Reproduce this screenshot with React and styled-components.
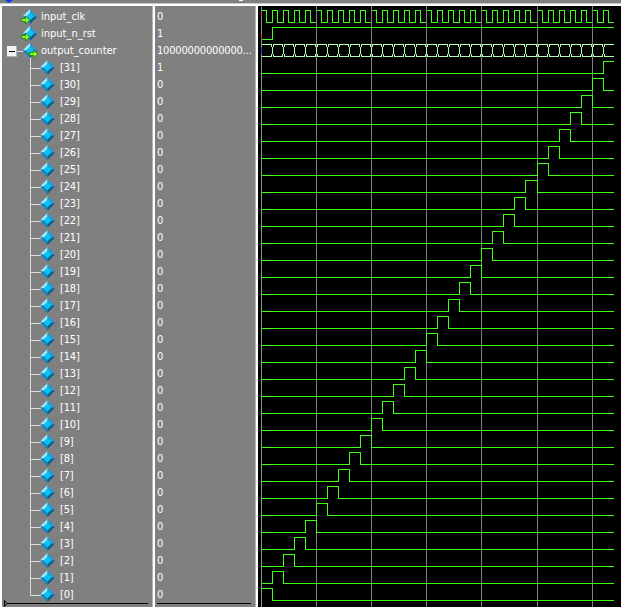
import React from "react";
import styled, { createGlobalStyle } from "styled-components";

const ROW = 17;
const PERIOD = 11.033;
const START = 3;
const END = 356;
const BITS = Array.from({ length: 32 }, (_, i) => 31 - i);

const Global = createGlobalStyle`
  body { margin: 0; background: #000; overflow: hidden; }
`;

const Window = styled.main`
  width: 621px;
  height: 607px;
  display: flex;
  flex-direction: column;
  overflow: hidden;
  background: #808080;
  font: 11px/17px "DejaVu Sans Condensed", "DejaVu Sans", sans-serif;
  font-stretch: condensed;
  color: #fff;
`;

const Header = styled.header`
  height: 3px;
  flex: none;
  display: flex;
  padding-left: 5px;
  background: #808080;
  border-bottom: 1px solid #c8c8c8;
`;

const Marker = styled.svg`
  display: block;
`;

const Panes = styled.div`
  flex: 1;
  min-height: 0;
  display: grid;
  grid-template-columns: 155px 103px 363px;
  border-top: 2px solid #fff;
`;

const Pane = styled.section`
  box-sizing: border-box;
  height: 601px;
  display: flex;
  flex-direction: column;
  padding-top: 2px;
  background: #808080;
  border-right: 2px solid #fff;
  border-left: ${(p) => (p.$first ? "2px solid #fff" : "0")};
  box-shadow: inset -1px 0 #b4b4b4;
`;

const Row = styled.div`
  height: ${ROW}px;
  flex: none;
  display: flex;
  align-items: center;
  white-space: nowrap;
`;

const Art = styled.svg`
  width: ${(p) => p.$w}px;
  height: 17px;
  flex: none;
  display: block;
`;

const Label = styled.span`
  letter-spacing: ${(p) => p.$track || 0}px;
`;

const Value = styled(Label)`
  padding-left: 2px;
`;

const Baseline = styled.svg`
  display: block;
  flex: none;
  height: 8px;
  margin-top: -4px;
`;

const Waves = styled.svg`
  display: block;
  background: #000;
`;

function Diamond({ x, y }) {
  return (
    <g transform={`translate(${x} ${y})`}>
      <path d="M0 -7.5L-7.5 0L0 0Z" fill="#a4e8fa" />
      <path d="M0 -7.5L7.5 0L0 0Z" fill="#1b9fd4" />
      <path d="M-7.5 0L0 7.5L0 0Z" fill="#1683bd" />
      <path d="M7.5 0L0 7.5L0 0Z" fill="#075f91" />
      <path d="M0 -4L4 0L0 4L-4 0Z" fill="#0cc0f5" />
    </g>
  );
}

function Arrow({ x, y }) {
  return (
    <path
      transform={`translate(${x} ${y})`}
      d="M0 2.5H4V0L8.5 4L4 8V5.5H0Z"
      fill="#8cf52a"
      stroke="#177c0c"
      strokeWidth="0.8"
    />
  );
}

function PortArt({ output }) {
  return (
    <Art $w={39} viewBox="0 0 39 17">
      {output && (
        <g shapeRendering="crispEdges">
          <path d="M15 9.5H21M28.5 14V17" stroke="#dcdcdc" />
          <rect x="5" y="4" width="10" height="11" fill="#f4f4f8" />
          <path d="M5 14.5H15M14.5 4V15" stroke="#aeb4c0" />
          <path d="M7 9H13" stroke="#000" />
        </g>
      )}
      <Diamond x={28} y={8.5} />
      <Arrow x={output ? 27.5 : 19.5} y={8} />
    </Art>
  );
}

function BitArt({ last }) {
  return (
    <Art $w={58} viewBox="0 0 58 17">
      <path
        d={`M28.5 0V${last ? 10 : 17}M28 9.5H39`}
        stroke="#dcdcdc"
        shapeRendering="crispEdges"
        fill="none"
      />
      <Diamond x={45.5} y={8.5} />
    </Art>
  );
}

const edge = (k) => START + Math.floor(k * PERIOD + 0.2) + 0.5;

function clockPath() {
  let d = `M${START} 4.5`;
  for (let k = 0; k < 32; k++) {
    const fall = edge(k) + 5;
    d += `H${fall}V16.5H${k === 31 ? END : edge(k + 1)}`;
    if (k < 31) d += "V4.5";
  }
  return d;
}

function busPath() {
  let d = "";
  for (let k = 0; k < 32; k++) {
    const a = edge(k);
    const b = k === 31 ? END : edge(k + 1) - 0.5;
    d += `M${a + 0.5} 38.5H${b}M${a + 0.5} 50.5H${b}`;
    if (k) d += `M${a + 1} 38V41M${a} 41V48M${a + 1} 48V51`;
    if (k < 31) d += `M${edge(k + 1) - 1} 38V41M${edge(k + 1) - 1} 48V51`;
  }
  return d;
}

function bitPath(bit) {
  const low = 67.5 + (31 - bit) * ROW;
  const high = low - 12;
  const rise = edge(bit);
  const begin = bit === 0 ? `M${START} ${high}` : `M${START} ${low}H${rise}V${high}`;
  return bit === 31 ? `${begin}H${END}` : `${begin}H${edge(bit + 1)}V${low}H${END}`;
}

function WavePane() {
  return (
    <Waves width="363" height="601" viewBox="0 0 363 601" shapeRendering="crispEdges" fill="none">
      <g stroke="#3cff14">
        <path d={clockPath()} />
        <path d={`M${START} 33.5H${edge(1)}V21.5H${END}`} />
        {BITS.map((bit) => (
          <path key={bit} d={bitPath(bit)} />
        ))}
      </g>
      {[5, 10, 15, 20, 25, 30].map((k) => (
        <path key={k} d={`M${edge(k)} 0V601`} stroke="#808080" />
      ))}
      <g stroke="#3cff14">
        <path d={`M${edge(1)} 21.5H${END}`} />
        {BITS.map((bit) => (
          <path key={bit} d={bitPath(bit)} />
        ))}
      </g>
      <path d={busPath()} stroke="#b4ffb4" />
      <path d="M3.5 1V601" stroke="#78a078" />
      <path d="M3.5 5V11M3.5 28V34" stroke="#c04058" />
      <path d="M3.5 41V48" stroke="#2038e0" />
    </Waves>
  );
}

export default function App() {
  return (
    <>
      <Global />
      <Window>
        <Header>
          <Marker width="240" height="3" viewBox="0 0 240 3">
            <path d="M0 0H8L4 3Z" fill="#0040f0" />
            <path d="M234 0.5H238" stroke="#fff" />
          </Marker>
        </Header>
        <Panes>
          <Pane $first>
            <Row><PortArt /><Label>input_clk</Label></Row>
            <Row><PortArt /><Label>input_n_rst</Label></Row>
            <Row><PortArt output /><Label>output_counter</Label></Row>
            {BITS.map((bit) => (
              <Row key={bit}>
                <BitArt last={bit === 0} />
                <Label $track={-0.2}>[{bit}]</Label>
              </Row>
            ))}
            <Baseline width="150" viewBox="0 0 150 8">
              <path d="M5 4.5H146M2.5 1.5V7.5L5 4.5Z" stroke="#000" fill="none" />
            </Baseline>
          </Pane>
          <Pane>
            <Row><Value>0</Value></Row>
            <Row><Value>1</Value></Row>
            <Row><Value $track={-0.17}>10000000000000...</Value></Row>
            {BITS.map((bit) => (
              <Row key={bit}><Value>{bit === 31 ? 1 : 0}</Value></Row>
            ))}
            <Baseline width="100" viewBox="0 0 100 8">
              <path d="M2 4.5H96" stroke="#000" />
            </Baseline>
          </Pane>
          <WavePane />
        </Panes>
      </Window>
    </>
  );
}
